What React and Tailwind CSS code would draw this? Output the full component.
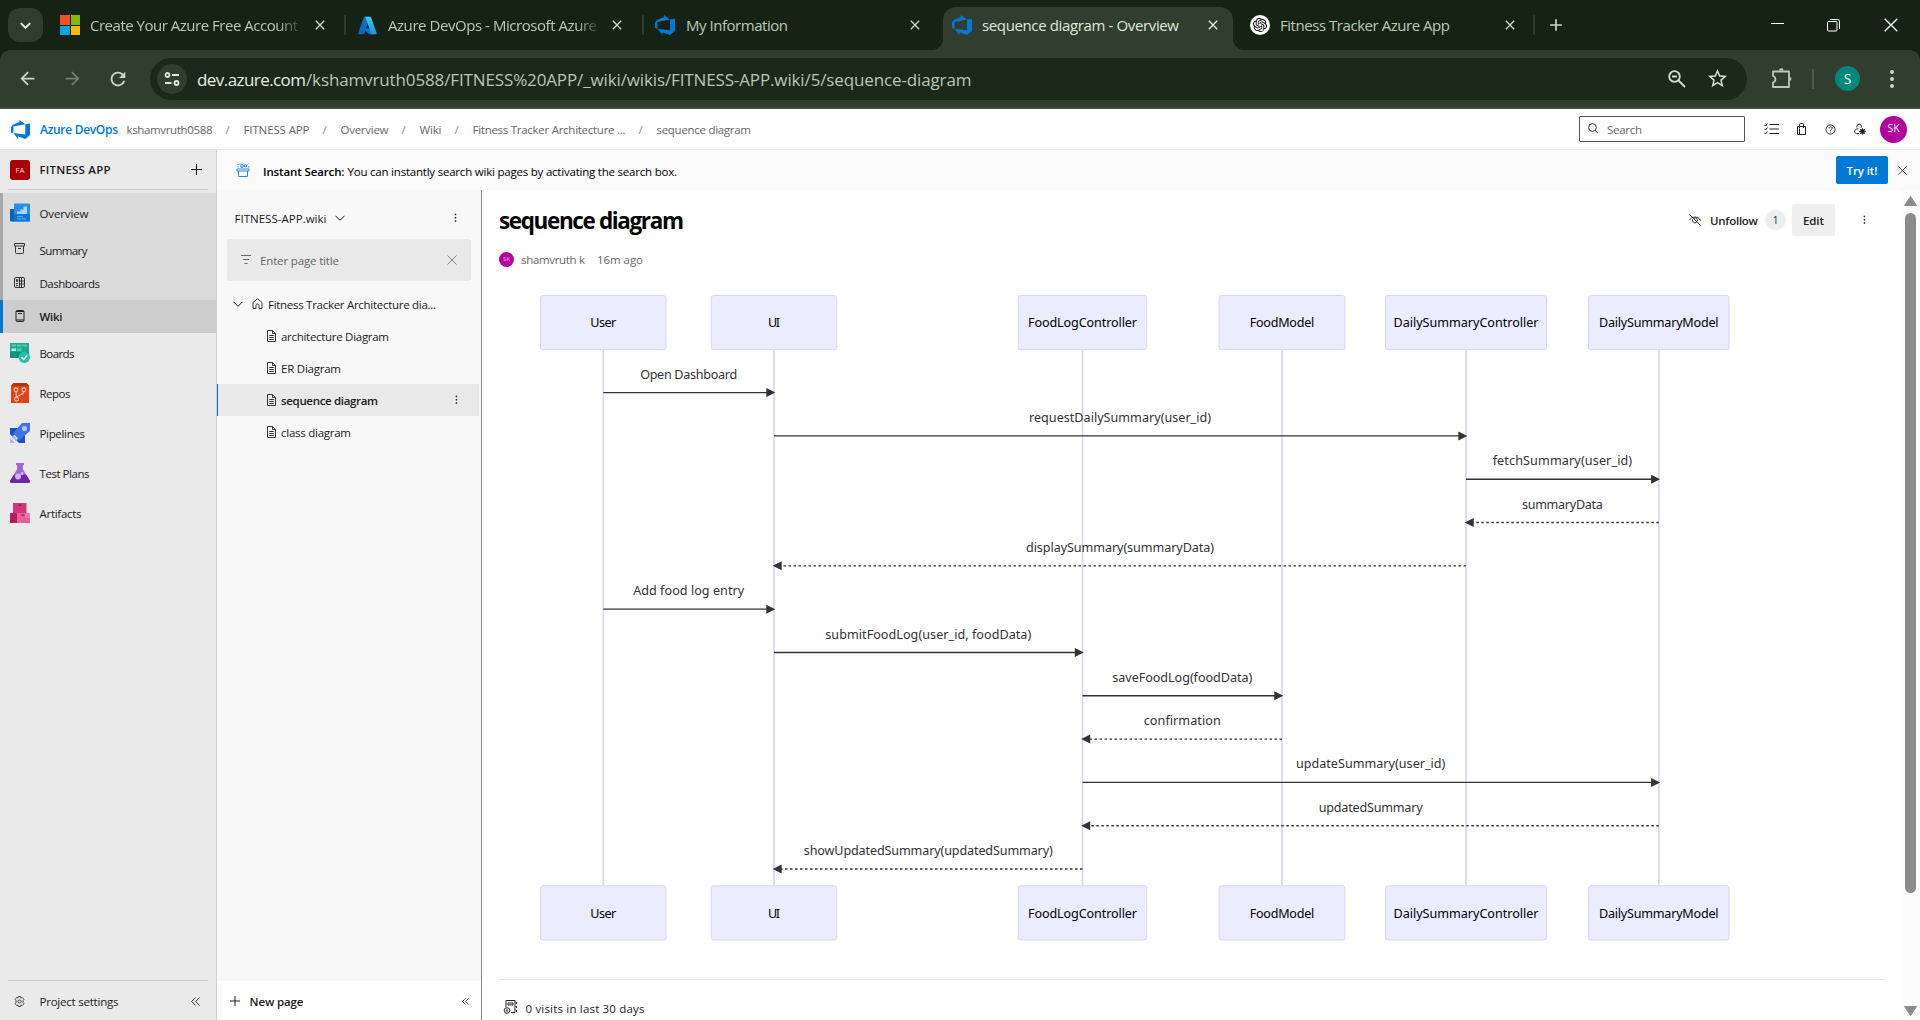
import React, { useLayoutEffect, useRef } from "react";
import { MdArrowBack, MdArrowForward, MdRefresh, MdStarBorder, MdClose, MdAdd } from "react-icons/md";
import { SiOpenai } from "react-icons/si";

/* Text that is tracked so that it fills exactly `w` pixels. */
function Fit({ w, className = "", children }) {
  const ref = useRef(null);
  useLayoutEffect(() => {
    const el = ref.current;
    el.style.letterSpacing = "0px";
    el.style.width = "auto";
    const natural = el.getBoundingClientRect().width;
    const n = Math.max(1, el.textContent.length - 1);
    el.style.letterSpacing = `${(w - natural) / n}px`;
    el.style.width = `${w}px`;
  }, [w, children]);
  return (
    <span ref={ref} className={`inline-block shrink-0 whitespace-nowrap ${className}`}>
      {children}
    </span>
  );
}

const Svg = ({ className = "", box = "0 0 16 16", sw = 1, children }) => (
  <svg className={`block shrink-0 ${className}`} viewBox={box} fill="none" stroke="currentColor" strokeWidth={sw}>
    {children}
  </svg>
);

const DevOpsLogo = ({ className }) => (
  <svg className={`block shrink-0 ${className}`} viewBox="0 0 24 24" fill="#0078d7">
    <path d="M0 8.877L2.247 5.91l8.405-3.416V.022l7.37 5.393L2.966 8.338v8.225L0 15.707zm24-4.45v14.651l-5.753 4.9-9.303-3.057v3.056l-5.978-7.416 15.057 1.798V5.415z" />
  </svg>
);

const AzureLogo = () => (
  <svg className="block size-[19px] shrink-0" viewBox="0 0 24 24">
    <defs>
      <linearGradient id="azl" x1="0.6" y1="0" x2="0.3" y2="1">
        <stop offset="0" stopColor="#1a6fc4" />
        <stop offset="1" stopColor="#0669bc" />
      </linearGradient>
      <linearGradient id="azr" x1="0.3" y1="0" x2="0.6" y2="1">
        <stop offset="0" stopColor="#3ccbf4" />
        <stop offset="1" stopColor="#2892df" />
      </linearGradient>
    </defs>
    <path d="M8.3 1h7L8 22.2a1.2 1.2 0 0 1-1.1.8H1.5a1.1 1.1 0 0 1-1.1-1.5L7.2 1.8A1.2 1.2 0 0 1 8.3 1z" fill="url(#azl)" />
    <path d="M18.5 15.4H7.3a.5.5 0 0 0-.4.9l7.2 6.7h6.4z" fill="#0078d4" />
    <path d="M16.6 1.8A1.2 1.2 0 0 0 15.5 1h-7c.5 0 1 .3 1.1.8l6.800 19.700a1.100 1.100 0 0 1-1.100 1.500h7.100a1.100 1.100 0 0 0 1.100-1.500z" fill="url(#azr)" />
  </svg>
);

const Plus = ({ className }) => (
  <Svg className={className} box="0 0 10 10"><path d="M5 0v10M0 5h10" /></Svg>
);
const Cross = ({ className }) => (
  <Svg className={className} box="0 0 10 10"><path d="M.5.5l9 9M9.500.5l-9 9" /></Svg>
);
const Down = ({ className }) => (
  <Svg className={className} box="0 0 10 10"><path d="M.5 2.800L5 7.300l4.500-4.500" /></Svg>
);
const Dots = ({ className }) => (
  <svg className={`block h-[10px] w-[3px] shrink-0 ${className}`} viewBox="0 0 3 10" fill="#222">
    <rect x=".7" y=".7" width="1.5" height="1.5" /><rect x=".7" y="4" width="1.5" height="1.5" /><rect x=".7" y="7.300" width="1.5" height="1.5" />
  </svg>
);
const Doc = () => (
  <Svg className="mb-px h-[12px] w-[9px] text-[#333]" box="0 0 9 12">
    <path d="M.5.500h5l3 3v8h-8zM5.500.500v3h3M2.300 5.500h4.500M2.300 7.500h4.500M2.300 9.500h4.500" />
  </Svg>
);
const Collapse = ({ className }) => (
  <Svg className={className} box="0 0 10 10"><path d="M5 .5L.7 5 5 9.500M9.500.5L5.200 5l4.300 4.500" /></Svg>
);

/* ---------- browser chrome ---------- */
const TabClose = () => <MdClose className="block size-4 shrink-0 text-[#c9d8c4]" />;
const TabSep = () => <span className="h-5 w-[2px] shrink-0 rounded bg-[#2f3d2d]" />;

function TabStrip() {
  const t = "text-[15px] leading-5 text-[#b9cab4]";
  return (
    <div className="flex h-[50px] items-center bg-[#162314]">
      <div className="ml-2 flex h-[34px] w-[35px] shrink-0 items-center justify-center rounded-[12px] bg-[#303d2e]">
        <Svg className="size-[11px] text-[#dfe9da]" box="0 0 10 10" sw={1.8}><path d="M.7 2.800L5 7.100l4.300-4.300" /></Svg>
      </div>
      <div className="flex w-[301px] shrink-0 items-center pl-[17px]">
        <div className="grid size-5 shrink-0 grid-cols-2 gap-[1px]">
          <span className="bg-[#f25022]" /><span className="bg-[#7fba00]" /><span className="bg-[#00a4ef]" /><span className="bg-[#ffb900]" />
        </div>
        <div className="ml-[10px] mr-[14px] w-[208px] overflow-hidden [mask-image:linear-gradient(to_right,black_90%,rgba(0,0,0,0.2))]">
          <Fit w={208} className={t}>Create Your Azure Free Account</Fit>
        </div>
        <TabClose />
      </div>
      <TabSep />
      <div className="flex w-[296px] shrink-0 items-center pl-[12px]">
        <AzureLogo />
        <div className="ml-[11px] mr-[12px] w-[209px] overflow-hidden [mask-image:linear-gradient(to_right,black_90%,rgba(0,0,0,0.2))]">
          <Fit w={209} className={t}>Azure DevOps - Microsoft Azure</Fit>
        </div>
        <TabClose />
      </div>
      <TabSep />
      <div className="flex w-[287px] shrink-0 items-center pl-[11px]">
        <DevOpsLogo className="size-5" />
        <Fit w={102} className={`ml-[11px] mr-[119px] ${t}`}>My Information</Fit>
        <TabClose />
      </div>
      <div className="flex h-full shrink-0 items-end">
        <div className="h-3 w-3 bg-[radial-gradient(circle_at_0_0,#162314_12px,#313e2f_12.5px)]" />
        <div className="flex h-[43px] w-[290px] items-center rounded-t-[13px] bg-[#313e2f] pb-2 pl-[9px]">
          <DevOpsLogo className="size-5" />
          <Fit w={197} className="ml-[10px] mr-[26px] text-[15px] leading-5 text-[#dfe9da]">sequence diagram - Overview</Fit>
          <MdClose className="block size-4 shrink-0 text-[#e6efe2]" />
        </div>
        <div className="h-3 w-3 bg-[radial-gradient(circle_at_100%_0,#162314_12px,#313e2f_12.5px)]" />
      </div>
      <div className="flex w-[288px] shrink-0 items-center pl-[5px]">
        <span className="flex size-5 shrink-0 items-center justify-center rounded-full bg-white"><SiOpenai className="size-[14px] text-black" /></span>
        <Fit w={170} className={`ml-[10px] mr-[52px] ${t}`}>Fitness Tracker Azure App</Fit>
        <TabClose />
      </div>
      <TabSep />
      <MdAdd className="ml-[11px] size-5 shrink-0 text-[#c9d8c4]" />
      <div className="ml-auto mr-[22px] flex items-center text-white">
        <span className="mb-[3px] mr-[43px] h-[1px] w-[13px] bg-white" />
        <Svg className="mr-[44px] size-[13px]" box="0 0 13 13"><rect x=".5" y="2.5" width="9.5" height="9.5" rx="1" /><path d="M3 .5h7.500a2 2 0 0 1 2 2V10" /></Svg>
        <Cross className="size-[14px]" />
      </div>
    </div>
  );
}

function Toolbar() {
  return (
    <div className="bg-[#162314]">
      <div className="flex h-[59px] items-center rounded-t-[10px] border-b-2 border-[#414d3f] bg-[#313e2f]">
        <MdArrowBack className="ml-[17px] size-[21px] text-[#c9d8c4]" />
        <MdArrowForward className="ml-[24px] size-[21px] text-[#71806d]" />
        <MdRefresh className="ml-[24px] size-[22px] text-[#c9d8c4]" />
        <div className="ml-[21px] flex h-[42px] w-[1597px] shrink-0 items-center rounded-full bg-[#1b281a]">
          <span className="ml-[7px] flex size-[30px] shrink-0 items-center justify-center rounded-full bg-[#313e2f]">
            <Svg className="size-4 text-[#dfe9da]" sw={1.8}><circle cx="3.5" cy="4" r="2" /><path d="M8 4h7M1 12h6.500" /><circle cx="12.5" cy="12" r="2" /></Svg>
          </span>
          <Fit w={109} className="ml-[10px] mt-[3px] text-[17px] leading-6 text-[#e6efe2]">dev.azure.com</Fit>
          <Fit w={665.5} className="mt-[3px] text-[17px] leading-6 text-[#b9c6b5]">/kshamvruth0588/FITNESS%20APP/_wiki/wikis/FITNESS-APP.wiki/5/sequence-diagram</Fit>
          <Svg className="ml-auto mr-[20px] size-[18px] text-[#d5ddd1]" box="0 0 18 18" sw={1.8}><circle cx="6.500" cy="6.500" r="5.300" /><path d="M10.500 10.500l6.500 6.500M4 6.500h5" /></Svg>
          <MdStarBorder className="mr-[18px] size-[23px] text-[#d5ddd1]" />
        </div>
        <Svg className="ml-[24px] size-[21px] text-[#b9cab4]" box="0 0 21 21" sw={1.8}>
          <path d="M2 3.500h16v15.500H2v-4.500c3.200-.8 3.200-5.500 0-6.500z" strokeLinejoin="round" />
          <path d="M8 2.600a2.300 2.300 0 0 1 4.600 0zM18.600 8.800c2.400.2 2.400 4 0 4.200z" fill="currentColor" stroke="none" />
        </Svg>
        <span className="ml-[20px] h-5 w-[2px] bg-[#4c5a49]" />
        <span className="ml-[21px] flex size-[25px] items-center justify-center rounded-full bg-[#00897b] text-[14px] text-white">S</span>
        <span className="ml-[30px] flex flex-col gap-[3px]">
          <i className="size-1 rounded-full bg-[#c9d8c4]" /><i className="size-1 rounded-full bg-[#c9d8c4]" /><i className="size-1 rounded-full bg-[#c9d8c4]" />
        </span>
      </div>
    </div>
  );
}

/* ---------- Azure DevOps header ---------- */
const crumbs = [
  ["FITNESS APP", 66],
  ["Overview", 48],
  ["Wiki", 22],
  ["Fitness Tracker Architecture ...", 153],
  ["sequence diagram", 94.5],
];

function Header() {
  return (
    <header className="flex h-[41px] items-center border-b border-[#e5e5e5] bg-white text-[11.5px] text-[#666]">
      <DevOpsLogo className="ml-[11px] size-[19px]" />
      <Fit w={78} className="ml-[10px] mt-[2px] text-[12px] font-semibold text-[#0078d4]">Azure DevOps</Fit>
      <Fit w={86} className="ml-[8.5px] mt-[2px]">kshamvruth0588</Fit>
      {crumbs.map(([label, w]) => (
        <React.Fragment key={label}>
          <span className="mt-[2px] w-[31px] shrink-0 pr-[1px] text-center text-[#888]">/</span>
          <Fit w={w} className="mt-[2px]">{label}</Fit>
        </React.Fragment>
      ))}
      <div className="ml-auto flex h-[26px] w-[166px] items-center rounded-[1px] border border-[#555] pl-[7px]">
        <Svg className="mb-[2px] size-[11px] text-[#333]" box="0 0 11 11"><circle cx="5.5" cy="4.5" r="3.9" /><path d="M8.300 7.300l2.500 3" /></Svg>
        <Fit w={35} className="ml-[9px] mt-[2px]">Search</Fit>
      </div>
      <div className="ml-[19px] mr-[13px] flex items-center text-[#222]">
        <Svg className="h-[12px] w-[15px]" box="0 0 15 12"><path d="M.5 2l1 1L3.500.500M.5 6l1 1L3.500 4.500M.5 10l1 1L3.500 8.500M5.500 1.500H15M5.500 6H15M5.500 10.500H15" /></Svg>
        <Svg className="ml-[18px] h-[12px] w-[9px]" box="0 0 9 12"><path d="M.5 3.500h8v8h-8zM2.500 5V1.500a1 1 0 0 1 1-1h2a1 1 0 0 1 1 1V5M2.500 5.500v6" /></Svg>
        <Svg className="ml-[19px] size-[11px]" box="0 0 12 12"><circle cx="6" cy="6" r="5" /><path d="M4.300 4.800c0-2.300 3.500-2.200 3.500-.1C7.800 6 6 5.900 6 7.300M6 8.300v1" /></Svg>
        <Svg className="ml-[18px] size-[12px]" box="0 0 12 12"><path d="M3 4.500a2.300 2.300 0 1 1 4 .3M5 10.500H2.500a2 2 0 0 1-1.500-3C1.800 6 3 5.800 4.500 5.800" /><circle cx="8.5" cy="8.5" r="1.600" strokeWidth="1.600" /><path d="M8.500 5v7M5 8.500h7M6 6l5 5M11 6l-5 5" strokeWidth=".8" /></Svg>
        <span className="ml-[14px] flex size-[27px] items-center justify-center rounded-full bg-[#b4009e] text-[10.5px] text-white">SK</span>
      </div>
    </header>
  );
}

/* ---------- project navigation ---------- */
const IcOverview = () => (
  <svg className="block size-5" viewBox="0 0 20 20">
    <path d="M0 6h4v12.500H1a1 1 0 0 1-1-1z" fill="#0f62b0" />
    <path d="M4 0.500h15a1 1 0 0 1 1 1v16a1 1 0 0 1-1 1H2.500A1.500 1.500 0 0 0 4 17z" fill="#2b8fe0" />
    <path d="M4 11h16v6.500a1 1 0 0 1-1 1H2.500A1.500 1.500 0 0 0 4 17z" fill="#0a78d4" />
    <path d="M7 8.500h3.500V6.500h3V3.500h3.500v7.500H7z" fill="#a9d6f8" />
    <path d="M7 13h6v1.200H7zM7 15.300h9v1.200H7z" fill="#4aa3ea" />
  </svg>
);
const IcBoards = () => (
  <svg className="block size-5" viewBox="0 0 20 20">
    <path d="M0 0h19v15H0z" fill="#1fa98c" /><path d="M0 9h19v6H0z" fill="#178f77" />
    <path d="M1.500 1.500h4.500v2H1.500zM7 1.500h4.500v2H7zM12.500 1.500h4.500v2h-4.500zM7 5.500h4.500v2.500H7z" fill="#4fd0b0" />
    <path d="M1.500 5.500h4.500v2.500H1.500z" fill="#b5f2e3" />
    <circle cx="14.300" cy="14.300" r="5.700" fill="#1dc3a4" /><path d="M11.500 14.300l2.200 2.200 3.500-4" stroke="#fff" strokeWidth="1.500" fill="none" />
  </svg>
);
const IcRepos = () => (
  <svg className="block size-5" viewBox="0 0 20 20">
    <path d="M3.500 0h13L19 3v17H1V3z" fill="#e0451a" /><path d="M3.500 0h13L19 3H1z" fill="#b8330c" />
    <g fill="none" stroke="#ffc9b5" strokeWidth="1.100"><circle cx="6" cy="6.800" r="1.900" /><circle cx="13.800" cy="6.800" r="1.900" /><circle cx="6.500" cy="16.200" r="1.900" /><path d="M6 8.700l.4 5.600M13.800 8.700c0 3-4.500 2.500-7.300 5.400" /></g>
  </svg>
);
const IcPipelines = () => (
  <svg className="block size-5" viewBox="0 0 20 20">
    <path d="M0 5h8l-5 9-3-3z" fill="#1b50c4" /><path d="M15 10v10H9l-3-3z" fill="#1b50c4" />
    <path d="M12 0h8v8L9.500 17 3 10.500z" fill="#3f72e8" /><circle cx="14.500" cy="5.500" r="2.600" fill="#a8c4fb" />
    <path d="M3 12l5 5-2.500 1-3.500-3.500zM0 15l5 5H0z" fill="#9cb9f8" />
  </svg>
);
const IcTest = () => (
  <svg className="block size-5" viewBox="0 0 20 20">
    <path d="M6 0h8v2h-1v4.500l6.700 11A1.600 1.600 0 0 1 18.300 20H1.700a1.600 1.600 0 0 1-1.400-2.500L7 6.500V2H6z" fill="#a266d8" />
    <path d="M4 11.500h12l3.700 6a1.600 1.600 0 0 1-1.400 2.500H1.700a1.600 1.600 0 0 1-1.400-2.500z" fill="#6d27ad" />
    <circle cx="8" cy="13.500" r="3" fill="#d3b1f0" /><circle cx="12" cy="10.500" r="1.500" fill="#d3b1f0" />
  </svg>
);
const IcArtifacts = () => (
  <svg className="block size-5" viewBox="0 0 20 20">
    <path d="M3 0h13.500v10H3z" fill="#d5357a" /><path d="M0 10h7v10H0z" fill="#b31f5e" /><path d="M7 10h13v10H7z" fill="#ea5f9a" />
    <path d="M8.500 1.500h3v1.300h-3zM11.500 11.500h3v1.300h-3z" fill="#8d1546" /><path d="M15 10h5v5h-5z" fill="#f48cb8" opacity=".5" />
  </svg>
);
const IcSummary = () => <Svg className="mx-[4px] mb-[3px] size-[11px] text-[#333]" box="0 0 11 11"><path d="M.5.500h10v2.500H.5zM1.500 3v6.500a1 1 0 0 0 1 1h6a1 1 0 0 0 1-1V3M4 5.500h3" /></Svg>;
const IcDash = () => <Svg className="mx-[4px] mb-[3px] size-[11px] text-[#333]" box="0 0 11 11"><rect x=".5" y=".5" width="10" height="10" rx="1.500" /><path d="M5.500.5v10M2.500 2.500h1.300v2H2.500zM2 6.500h2M2 8.500h2M7.500.5v10M5.500 4h5M5.500 7h5" /></Svg>;
const IcWiki = () => <Svg className="mx-[4px] mb-[1px] size-[12px] text-[#222]" box="0 0 12 12"><rect x="2" y=".5" width="8" height="11" rx="1.200" /><path d="M2 1.500h8M4 3.500h4M2 10h8" /></Svg>;

function NavItem({ icon, label, w, h, className = "" }) {
  return (
    <div className={`flex shrink-0 items-center pl-[7px] ${h} ${className}`}>
      <span className="w-5 shrink-0">{icon}</span>
      <Fit w={w} className="ml-[9.5px] mt-[1px]">{label}</Fit>
    </div>
  );
}

function Sidebar() {
  const base = "border-l-[3px] border-transparent";
  return (
    <nav className="flex w-[217px] shrink-0 flex-col border-r border-[#cfcfcf] bg-[#eaeaea] text-[11.5px] text-[#1a1a1a]">
      <div className="mx-2 flex h-10 shrink-0 items-center border-b border-[#cbcbcb] pl-[2px]">
        <span className="flex size-5 items-center justify-center rounded-[3px] bg-[#a80000] text-[8px] text-[#ffd9d9]">FA</span>
        <Fit w={71} className="ml-[9.5px] font-semibold">FITNESS APP</Fit>
        <Plus className="ml-auto mr-[6px] size-[11px]" />
      </div>
      <div className="h-[3px] shrink-0" />
      <NavItem h="h-[42px] pb-[2px]" className="border-l-[3px] border-[#a8a8a8] bg-[#dbdbdb] font-medium" icon={<IcOverview />} label="Overview" w={49} />
      <NavItem h="h-[32px] pb-[2px]" className="border-l-[3px] border-[#a8a8a8] bg-[#dbdbdb]" icon={<IcSummary />} label="Summary" w={48} />
      <NavItem h="h-[33px]" className="border-l-[3px] border-[#a8a8a8] bg-[#dbdbdb]" icon={<IcDash />} label="Dashboards" w={60.5} />
      <NavItem h="h-[33px]" className="border-l-[3px] border-[#0078d4] bg-[#cdcdcd] font-semibold" icon={<IcWiki />} label="Wiki" w={23} />
      <NavItem h="h-10" className={base} icon={<IcBoards />} label="Boards" w={35} />
      <NavItem h="h-10" className={base} icon={<IcRepos />} label="Repos" w={31} />
      <NavItem h="h-10" className={base} icon={<IcPipelines />} label="Pipelines" w={45.5} />
      <NavItem h="h-10" className={base} icon={<IcTest />} label="Test Plans" w={50} />
      <NavItem h="h-10" className={base} icon={<IcArtifacts />} label="Artifacts" w={42} />
      <div className="mx-2 mt-auto flex h-10 items-center border-t border-[#cbcbcb] pl-[6px] pt-[3px]">
        <Svg className="mb-[2px] size-[11px] text-[#333]" box="0 0 12 12"><circle cx="6" cy="6" r="1.700" /><path d="M4.800.6h2.400l.4 1.500 1.500-.400 1.700 2-1 1.300v2l1 1.300-1.700 2-1.500-.4-.4 1.500H4.800l-.4-1.500-1.500.4-1.700-2 1-1.300V5l-1-1.300 1.700-2 1.500.4z" /></Svg>
        <Fit w={79} className="ml-[14.5px]">Project settings</Fit>
        <Collapse className="mb-[2px] ml-auto mr-[8px] size-[9px] text-[#222]" />
      </div>
    </nav>
  );
}

/* ---------- wiki page tree ---------- */
const pages = [
  ["architecture Diagram", 108],
  ["ER Diagram", 60],
  ["sequence diagram", 97, true],
  ["class diagram", 70],
];

function WikiTree() {
  return (
    <aside className="flex w-[264px] shrink-0 flex-col bg-[#f8f8f8] text-[11.5px] text-[#1a1a1a]">
      <div className="mt-[10px] flex h-[36px] items-center pl-[17.5px] font-medium">
        <Fit w={92} className="mt-[1px]">FITNESS-APP.wiki</Fit>
        <Down className="ml-[8px] size-[10px]" />
        <Dots className="ml-auto mr-[24px]" />
      </div>
      <div className="ml-[10px] mt-[3px] flex h-[42px] w-[244px] items-center rounded-[3px] bg-[#e9e9e9] pl-[14px] text-[#666]">
        <Svg className="mb-[2px] h-[9px] w-[10px]" box="0 0 10 9"><path d="M0 .5h10M2 4.500h6M3.500 8.500h3" /></Svg>
        <Fit w={79} className="ml-[9px] mt-[2px]">Enter page title</Fit>
        <Cross className="ml-auto mr-[14px] size-[10px] text-[#888]" />
      </div>
      <div className="mt-[7px] flex h-8 items-center pl-[16px]">
        <Down className="size-[10px]" />
        <Svg className="mb-px ml-[9px] size-[11px] text-[#333]" box="0 0 11 11"><path d="M1 4.500V10.500h3v-3a1.500 1.500 0 0 1 3 0v3h3v-6L5.500.600z" /></Svg>
        <Fit w={168} className="ml-[5px] mt-[2px]">Fitness Tracker Architecture dia...</Fit>
      </div>
      {pages.map(([label, w, active]) => (
        <div key={label} className={`mr-[2px] flex h-8 items-center border-l ${active ? "border-[#0078d4] bg-[#e9e9e9] font-semibold" : "border-transparent"} pl-[49px]`}>
          <Doc />
          <Fit w={w} className="ml-[5px] mt-[1px]">{label}</Fit>
          {active && <Dots className="ml-auto mr-[21px]" />}
        </div>
      ))}
      <div className="mt-auto flex h-[39px] items-center bg-white pl-[13px] pt-[2px] font-semibold">
        <Plus className="mb-px size-[10px]" />
        <Fit w={54} className="ml-[9.5px]">New page</Fit>
        <Collapse className="ml-auto mr-[12px] size-[7px]" />
      </div>
    </aside>
  );
}

/* ---------- sequence diagram ---------- */
const actors = [
  ["User", 603.3, 125.5, 26],
  ["UI", 774, 125.5, 12],
  ["FoodLogController", 1082.5, 128.5, 109],
  ["FoodModel", 1282, 126, 64.5],
  ["DailySummaryController", 1466, 161, 145],
  ["DailySummaryModel", 1658.8, 140.5, 119.5],
];
const messages = [
  ["Open Dashboard", 0, 1, 97],
  ["requestDailySummary(user_id)", 1, 4, 182],
  ["fetchSummary(user_id)", 4, 5, 139.5],
  ["summaryData", 5, 4, 81, true],
  ["displaySummary(summaryData)", 4, 1, 188, true],
  ["Add food log entry", 0, 1, 111],
  ["submitFoodLog(user_id, foodData)", 1, 2, 206],
  ["saveFoodLog(foodData)", 2, 3, 140],
  ["confirmation", 3, 2, 77, true],
  ["updateSummary(user_id)", 2, 5, 149.5],
  ["updatedSummary", 5, 2, 104, true],
  ["showUpdatedSummary(updatedSummary)", 2, 1, 249, true],
];

function Diagram() {
  return (
    <svg className="block h-[690px] w-[1400px]" viewBox="490 275 1400 690" fontFamily="'Noto Sans', 'Open Sans', sans-serif" fontSize="12.6">
      {actors.map(([name, x]) => (
        <line key={name} x1={x} x2={x} y1="350" y2="885" stroke="#dcd2f5" strokeWidth="1.7" />
      ))}
      {[295.5, 885.8].map((y) =>
        actors.map(([name, x, bw, tw]) => (
          <g key={name + y}>
            <rect x={x - bw / 2} y={y} width={bw} height="54.2" rx="2.500" fill="#ececff" stroke="#dcd2f5" />
            <text x={x - tw / 2} y={y + 31.8} textLength={tw} fill="#000">{name}</text>
          </g>
        ))
      )}
      {messages.map(([label, from, to, tw, dashed], i) => {
        const y = 392.6 + i * 43.31;
        const a = actors[from][1];
        const b = actors[to][1];
        const d = b > a ? 1 : -1;
        const tip = b + d * 1.3;
        return (
          <g key={label}>
            <line x1={a} x2={b - d * 7} y1={y} y2={y} stroke="#333" strokeWidth="1.4" strokeDasharray={dashed ? "2.500 2.500" : undefined} />
            <path d={`M${tip} ${y}L${tip - d * 9} ${y - 4.5}V${y + 4.5}z`} fill="#333" />
            <text x={(a + b) / 2 - tw / 2} y={y - 13.9} textLength={tw} fill="#333">{label}</text>
          </g>
        );
      })}
    </svg>
  );
}

function Banner() {
  return (
    <div className="flex h-10 shrink-0 items-center bg-[#fafafa] text-[11.5px] text-black">
      <Svg className="ml-[19px] size-[14px] text-[#2b88d8]" box="0 0 14 14"><path d="M1 6h12v2H1zM2.500 8v5.500h9V8" /><path d="M4 .500v1M1.500 1l1 1M12.500.500l-1 1M1.500 4h1M12 4h1.500" /><circle cx="6" cy="3" r="1.400" /><circle cx="9.500" cy="2.800" r="1.200" /></Svg>
      <Fit w={81.5} className="ml-[13px] mt-[4px] font-semibold">Instant Search:</Fit>
      <Fit w={329.5} className="ml-[3px] mt-[4px]">You can instantly search wiki pages by activating the search box.</Fit>
      <span className="ml-auto flex h-[28px] w-[52px] items-center justify-center rounded-[2px] bg-[#0078d4] pt-[2px] font-semibold text-white"><Fit w={31}>Try it!</Fit></span>
      <Cross className="ml-[10px] mr-[13px] size-[9px] text-[#333]" />
    </div>
  );
}

function WikiPage() {
  return (
    <main className="flex min-w-0 flex-1 border-l border-[#888] bg-white text-[11.5px]">
      <div className="flex min-w-0 flex-1 flex-col pl-[17px]">
        <div className="flex h-[56px] items-center pt-[5px]">
          <Fit w={185} className="text-[22.5px] font-bold leading-8 text-black">sequence diagram</Fit>
          <div className="ml-auto mr-[35px] flex items-center font-semibold text-[#222]">
            <Svg className="mb-[2px] size-[12px]" box="0 0 12 12"><path d="M.5.500l11 11M.5 6C2.500 2.500 9 1.500 11.500 6.500M3.500 5.500a2.700 2.700 0 0 0 4 3M5 4a2.500 2.500 0 0 1 3.300 3" /></Svg>
            <Fit w={48} className="ml-[9px]">Unfollow</Fit>
            <span className="mb-[1px] ml-[7px] flex h-[20px] w-[21px] items-center justify-center rounded-full bg-[#eeeeee] text-[10px] font-normal">1</span>
            <span className="mb-[1px] ml-[6px] flex h-[32px] w-[43px] items-center justify-center rounded-[2px] bg-[#efefef] pt-[1px]"><Fit w={21}>Edit</Fit></span>
            <Dots className="mb-[2px] ml-[28px]" />
          </div>
        </div>
        <div className="flex h-[29px] items-center pb-[3px] text-[#666]">
          <span className="flex size-[15px] items-center justify-center rounded-full bg-[#b4009e] text-[6px] text-[#f3b8ea]">SK</span>
          <Fit w={64} className="ml-[7px] mt-[1px]">shamvruth k</Fit>
          <Fit w={46} className="ml-[12px] mt-[1px]">16m ago</Fit>
        </div>
        <div className="-ml-[9px] h-[704px]">
          <Diagram />
        </div>
        <div className="mr-[17px] flex h-[41px] items-start border-t border-[#e5e5e5] pl-[4px] pt-[19px] text-[#222]">
          <Svg className="mt-[1px] size-[14px]" box="0 0 14 14"><path d="M3 7V.500h9V12.500H8M5 3h5v2H5zM13.500 2v2M13.500 6v2M13.500 10v2" /><circle cx="4" cy="10.500" r="2.800" /><circle cx="4" cy="10.500" r=".8" /></Svg>
          <Fit w={119} className="ml-[8.5px] leading-[19px]">0 visits in last 30 days</Fit>
        </div>
      </div>
      <div className="flex w-[19px] shrink-0 flex-col items-center bg-[#fcfcfc]">
        <svg className="mt-[6px] h-[10px] w-[13px] shrink-0" viewBox="0 0 13 10" fill="#8b8b8b"><path d="M6.500.5L12.500 9.500H.5z" stroke="#8b8b8b" strokeLinejoin="round" /></svg>
        <div className="mt-[7px] h-[680px] w-[11px] shrink-0 rounded-full bg-[#8b8b8b]" />
        <svg className="mb-[4px] mt-auto h-[10px] w-[13px] shrink-0" viewBox="0 0 13 10" fill="#8b8b8b"><path d="M6.500 9.500L12.500.5H.5z" stroke="#8b8b8b" strokeLinejoin="round" /></svg>
      </div>
    </main>
  );
}

export default function App() {
  return (
    <div className="flex h-[1020px] w-[1920px] flex-col overflow-hidden bg-white font-['Open_Sans','Noto_Sans',sans-serif]">
      <TabStrip />
      <Toolbar />
      <Header />
      <div className="flex min-h-0 flex-1">
        <Sidebar />
        <div className="flex min-w-0 flex-1 flex-col">
          <Banner />
          <div className="flex min-h-0 flex-1">
            <WikiTree />
            <WikiPage />
          </div>
        </div>
      </div>
    </div>
  );
}
